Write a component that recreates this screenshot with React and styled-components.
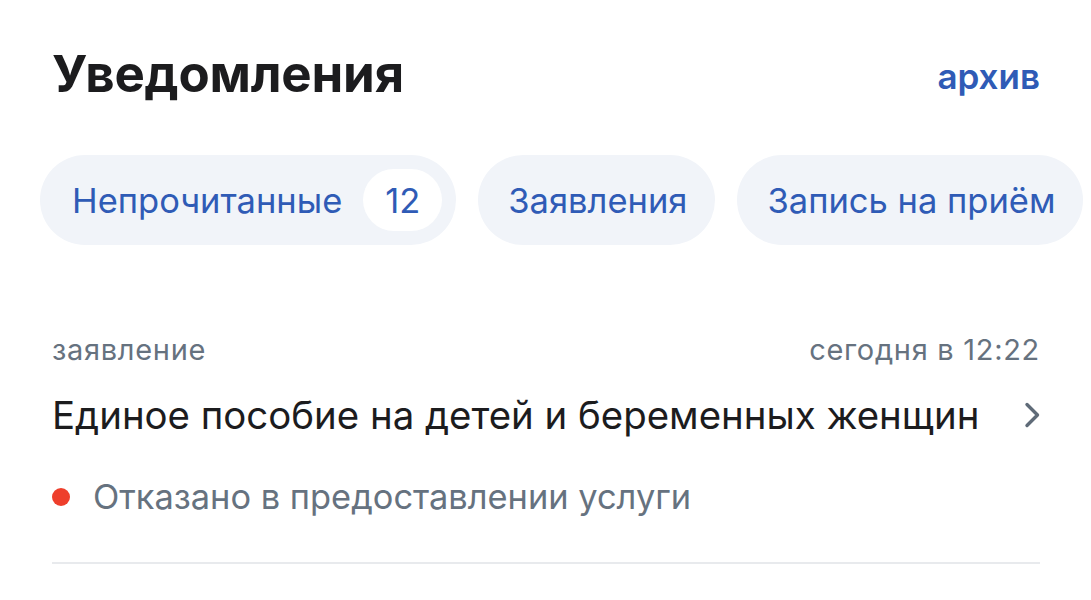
import React from 'react';
import styled, { createGlobalStyle } from 'styled-components';

/* ───────────── global ───────────── */

const GlobalStyle = createGlobalStyle`
  html, body {
    margin: 0;
    padding: 0;
    background: #ffffff;
  }
  body {
    font-family: Inter, Roboto, "Noto Sans", sans-serif;
    -webkit-font-smoothing: antialiased;
  }
`;

/* ───────────── styled‑components ───────────── */

const Page = styled.div`
  width: 1091px;
  height: 600px;
  overflow: hidden;
  padding: 0 51px 0 52px;
  box-sizing: border-box;
`;

const Header = styled.div`
  display: flex;
  align-items: center;
  justify-content: space-between;
  height: 148px;
  padding-bottom: 2px;
  box-sizing: border-box;
`;

const Title = styled.h1`
  margin: 0;
  font-size: 51px;
  font-weight: 700;
  color: #1c1c1e;
  letter-spacing: -0.2px;
`;

const ArchiveLink = styled.a`
  font-size: 35px;
  font-weight: 600;
  color: #2f5bb6;
  text-decoration: none;
  margin-top: 6px;
`;

const Chips = styled.div`
  display: flex;
  gap: 22px;
  margin: 7px -51px 0 -12px;
  white-space: nowrap;
  overflow: hidden;
`;

const Chip = styled.div`
  flex-shrink: 0;
  display: flex;
  align-items: center;
  gap: 21px;
  height: 90px;
  padding: 0 ${({ $hasBadge }) => ($hasBadge ? '14px' : '28px')} 0 ${({ $hasBadge }) => ($hasBadge ? '32px' : '30px')};
  border-radius: 45px;
  background: #f1f4f9;
  color: #2f5bb6;
  font-size: 34.5px;
  font-weight: 400;
`;

const Badge = styled.span`
  display: flex;
  align-items: center;
  justify-content: center;
  min-width: 79px;
  height: 62px;
  border-radius: 31px;
  background: #ffffff;
`;

const Item = styled.div`
  margin-top: 88px;
  padding-bottom: 44px;
  border-bottom: 2px solid #e8eaed;
`;

const Meta = styled.div`
  display: flex;
  justify-content: space-between;
  align-items: center;
  height: 34px;
  font-size: 29px;
  line-height: 34px;
  color: #66727f;
  letter-spacing: 0.7px;
`;

const ItemTitle = styled.div`
  display: flex;
  align-items: center;
  justify-content: space-between;
  margin-top: 25px;
  height: 46px;
  font-size: 38.4px;
  line-height: 46px;
  color: #1c1c1e;
`;

const Status = styled.div`
  display: flex;
  align-items: center;
  gap: 23px;
  margin-top: 38px;
  height: 42px;
  font-size: 34.4px;
  line-height: 42px;
  color: #66727f;
`;

const Dot = styled.span`
  width: 18px;
  height: 18px;
  border-radius: 50%;
  background: ${({ $color }) => $color};
  flex-shrink: 0;
`;

/* ───────────── component ───────────── */

const chips = [
  { label: 'Непрочитанные', count: 12 },
  { label: 'Заявления' },
  { label: 'Запись на приём' },
];

function Chevron() {
  return (
    <svg width="16" height="26" viewBox="0 0 16 26" fill="none">
      <path
        d="M3 2.5l10.5 10.5-10.5 10.5"
        stroke="#5f6b78"
        strokeWidth="3.4"
        strokeLinecap="round"
        strokeLinejoin="round"
      />
    </svg>
  );
}

export default function App() {
  return (
    <>
      <GlobalStyle />
      <Page>
        <Header>
          <Title>Уведомления</Title>
          <ArchiveLink href="#">архив</ArchiveLink>
        </Header>

        <Chips>
          {chips.map((c) => (
            <Chip key={c.label} $hasBadge={c.count != null}>
              {c.label}
              {c.count != null && <Badge>{c.count}</Badge>}
            </Chip>
          ))}
        </Chips>

        <Item>
          <Meta>
            <span>заявление</span>
            <span>сегодня в 12:22</span>
          </Meta>
          <ItemTitle>
            <span>Единое пособие на детей и беременных женщин</span>
            <Chevron />
          </ItemTitle>
          <Status>
            <Dot $color="#ee3f2c" />
            Отказано в предоставлении услуги
          </Status>
        </Item>
      </Page>
    </>
  );
}
